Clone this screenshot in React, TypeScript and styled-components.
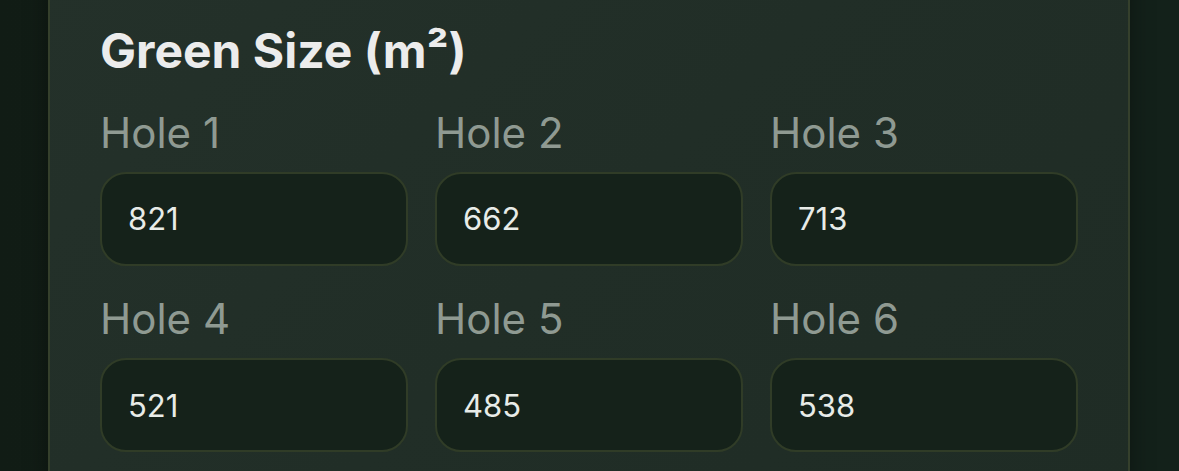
import styled, { createGlobalStyle } from 'styled-components';

const GlobalStyle = createGlobalStyle`
  * {
    box-sizing: border-box;
  }

  body {
    margin: 0;
    background: #13201a;
    font-family: Inter, "Noto Sans", "Liberation Sans", sans-serif;
    overflow: hidden;
  }
`;

const holes = [
  { hole: 1, size: 821 },
  { hole: 2, size: 662 },
  { hole: 3, size: 713 },
  { hole: 4, size: 521 },
  { hole: 5, size: 485 },
  { hole: 6, size: 538 },
];

export default function App() {
  return (
    <>
      <GlobalStyle />
      <Page>
        <Card>
          <Title>Green Size (m²)</Title>
          <Fields>
            {holes.map(({ hole, size }) => (
              <Field key={hole}>
                <Label htmlFor={`green-${hole}`}>Hole {hole}</Label>
                <Input id={`green-${hole}`} type="text" defaultValue={size} />
              </Field>
            ))}
          </Fields>
        </Card>
      </Page>
    </>
  );
}

const Page = styled.div`
  min-height: 100vh;
  padding: 0 49px 0 48px;
  background: linear-gradient(90deg, #111c15 0%, #13201a 50%, #13211a 100%);
`;

const Card = styled.section`
  margin-top: -40px;
  padding: 60px 50px 48px;
  border: 2px solid #35402c;
  border-radius: 24px;
  background: linear-gradient(135deg, #24312a 0%, #212e27 50%, #1f2c25 100%);
  box-shadow: 0 0 24px rgba(0, 0, 0, 0.35);
`;

const Title = styled.h2`
  margin: 0 0 28px;
  font-size: 48px;
  line-height: 1.2;
  font-weight: 700;
  color: #ececec;
`;

const Fields = styled.div`
  display: grid;
  grid-template-columns: repeat(3, 308px);
  column-gap: 27px;
  row-gap: 28px;
`;

const Field = styled.div`
  display: flex;
  flex-direction: column;
  gap: 14px;
`;

const Label = styled.label`
  font-size: 42px;
  line-height: 1.2;
  font-weight: 400;
  color: #8f9a92;
`;

const Input = styled.input`
  width: 308px;
  height: 94px;
  padding: 0 26px;
  border: 2px solid #303c27;
  border-radius: 26px;
  background: #15221a;
  font-family: inherit;
  font-size: 31px;
  color: #e8ece8;
  outline: none;
`;
